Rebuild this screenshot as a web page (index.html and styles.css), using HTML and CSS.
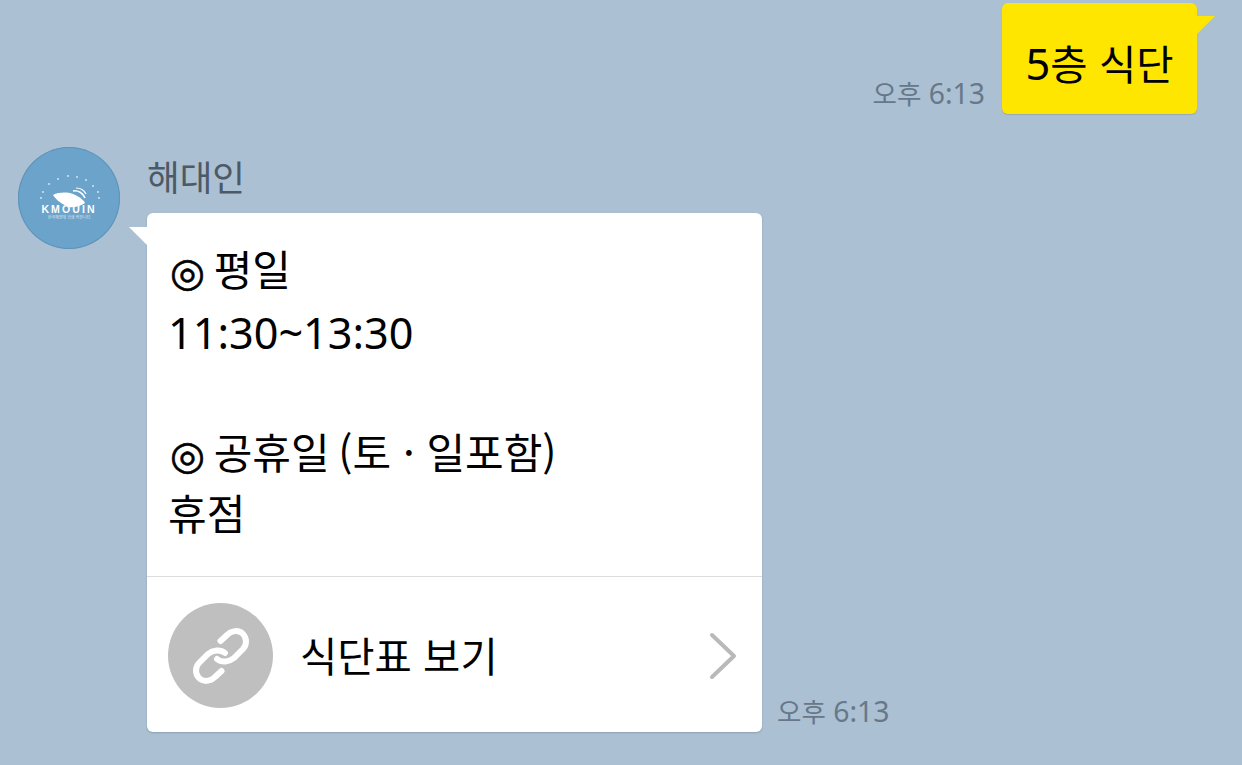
FILE: index.html
```html
<!DOCTYPE html>
<html lang="ko">

<head>
    <meta charset="UTF-8">
    <meta name="viewport" content="width=device-width, initial-scale=1.0">
    <title>채팅</title>
    <link rel="stylesheet" href="styles.css">
</head>

<body>
    <div class="chat">
        <!-- my message -->
        <div class="row-me">
            <span class="time time-me">오후 <span class="en">6:13</span></span>
            <div class="bubble-me">
                <span><span class="en">5</span>층 식단</span>
            </div>
        </div>

        <!-- bot message -->
        <div class="row-bot">
            <div class="avatar">
                <svg class="avatar-ship" width="102" height="102" viewBox="0 0 102 102">
                    <path d="M35 48 C41 45 49 45 55 47 C60 49 65 52 67 56 C63 59 56 61 50 60 C44 57 38 53 35 48 Z" fill="#fff" />
                    <path d="M55 44 C60 43 65 46 67 51" fill="none" stroke="#fff" stroke-width="1.6" />
                    <path d="M58 41 C62 41 66 43 68 47" fill="none" stroke="#fff" stroke-width="1.2" />
                    <g fill="#dcebf5">
                        <circle cx="40" cy="32" r="0.9" /><circle cx="50" cy="29" r="0.9" />
                        <circle cx="59" cy="30" r="0.9" /><circle cx="68" cy="33" r="0.9" />
                        <circle cx="31" cy="37" r="0.9" /><circle cx="75" cy="39" r="0.9" />
                        <circle cx="25" cy="45" r="0.9" /><circle cx="80" cy="45" r="0.9" />
                        <circle cx="23" cy="51" r="0.9" /><circle cx="81" cy="51" r="0.9" />
                    </g>
                </svg>
                <div class="avatar-name">KMOUIN</div>
                <div class="avatar-sub">한국해양대 학생 커뮤니티</div>
            </div>
            <div class="bot-body">
                <div class="name">해대인</div>
                <div class="bot-line">
                    <div class="card">
                        <div class="card-text">
                            <p><span class="mark">◎</span> 평일</p>
                            <p class="en">11:30~13:30</p>
                            <p class="blank">&nbsp;</p>
                            <p><span class="mark">◎</span> 공휴일 <span class="paren">(토 · 일포함)</span></p>
                            <p>휴점</p>
                        </div>
                        <div class="card-link">
                            <div class="link-icon">
                                <svg width="60" height="60" viewBox="0 0 60 60" fill="none" stroke="#fff" stroke-width="6" stroke-linecap="round">
                                    <path d="M29.5 15 L36 9 C41 4 48 4 52 8 C56 12 56 19 52 23 L43 32 C38 36 31 37 26 33" />
                                    <path d="M30.5 45 L24 51 C19 56 12 56 8 52 C4 48 4 41 8 37 L17 28 C22 24 29 23 34 27" />
                                </svg>
                            </div>
                            <div class="link-label">식단표 보기</div>
                            <svg class="chevron" width="30" height="48" viewBox="0 0 30 48" fill="none" stroke="#b9b9b9" stroke-width="4" stroke-linecap="round" stroke-linejoin="round">
                                <path d="M4 3 L26 24 L4 45" />
                            </svg>
                        </div>
                    </div>
                    <span class="time time-bot">오후 <span class="en">6:13</span></span>
                </div>
            </div>
        </div>
    </div>
</body>

</html>
```

FILE: styles.css
```css
html,
body {
    padding: 0;
    margin: 0;
}

body {
    height: 765px;
    overflow: hidden;
    background: #abc0d2;
    font-family: "Noto Sans CJK KR", "Noto Sans", sans-serif;
    color: #000;
}

/* digits are a bit larger than the hangul next to them */
.en {
    font-family: "Noto Sans", sans-serif;
    font-size: 1.07em;
}

.mark {
    font-family: "DejaVu Sans", sans-serif;
    font-size: 40px;
    margin-left: 2px;
    margin-right: -3px;
    -webkit-text-stroke: 0.6px #000;
}

.paren {
    margin-left: -3px;
}

.chat {
    display: flex;
    flex-direction: column;
    padding-top: 3px;
}

.row-me {
    display: flex;
    justify-content: flex-end;
    align-items: flex-end;
    padding-right: 45px;
}

.time {
    font-size: 26.5px;
    line-height: 38px;
    color: #66788a;
    white-space: nowrap;
}

.time-me {
    margin-right: 17px;
    margin-bottom: 2px;
}

.bubble-me {
    position: relative;
    display: flex;
    align-items: center;
    justify-content: center;
    box-sizing: border-box;
    width: 195px;
    height: 111px;
    padding-top: 8px;
    background: #ffe600;
    border-radius: 6px;
    box-shadow: 0 1px 1px rgba(80, 100, 120, 0.25);
    font-size: 40.5px;
    white-space: nowrap;
}

.bubble-me::after {
    content: "";
    position: absolute;
    top: 13px;
    right: -18px;
    width: 18px;
    height: 18px;
    background: #ffe600;
    clip-path: polygon(0 0, 100% 0, 0 100%);
}

.row-bot {
    display: flex;
    align-items: flex-start;
    margin-top: 33px;
    padding-left: 18px;
}

.avatar {
    position: relative;
    flex: none;
    width: 102px;
    height: 102px;
    margin-right: 27px;
    border-radius: 50%;
    background: #6ba3cb;
    box-shadow: inset 0 0 0 1px #5f93b8;
    overflow: hidden;
    color: #fff;
    text-align: center;
}

.avatar-ship {
    position: absolute;
    top: 0;
    left: 0;
}

.avatar-name {
    position: absolute;
    top: 56px;
    left: 0;
    right: 0;
    font-family: "Liberation Sans", sans-serif;
    font-size: 10.5px;
    line-height: 12px;
    font-weight: bold;
    letter-spacing: 2.1px;
}

.avatar-sub {
    position: absolute;
    top: 68px;
    left: 0;
    right: 0;
    font-size: 4px;
    line-height: 5px;
    color: #dcebf5;
}

.bot-body {
    display: flex;
    flex-direction: column;
}

.name {
    height: 66px;
    font-size: 35.5px;
    line-height: 58px;
    color: #4d5965;
}

.bot-line {
    display: flex;
    align-items: flex-end;
}

.card {
    position: relative;
    width: 615px;
    height: 519px;
    display: flex;
    flex-direction: column;
    background: #fff;
    border-radius: 6px;
    box-shadow: 0 1px 2px rgba(80, 100, 120, 0.35);
}

.card::before {
    content: "";
    position: absolute;
    top: 14px;
    left: -18px;
    width: 18px;
    height: 18px;
    background: #fff;
    clip-path: polygon(0 0, 100% 0, 100% 100%);
}

.card-text {
    flex: none;
    height: 364px;
    box-sizing: border-box;
    padding: 24px 21px 0;
    border-bottom: 1px solid #dcdcdc;
    font-size: 42px;
    line-height: 61px;
}

.card-text p {
    height: 61px;
    margin: 0;
    white-space: nowrap;
}

.card-text .en {
    font-size: 43.2px;
    line-height: 69px;
}

.card-link {
    flex: 1;
    display: flex;
    align-items: center;
    padding: 2px 24px 0 21px;
}

.link-icon {
    flex: none;
    display: flex;
    align-items: center;
    justify-content: center;
    width: 105px;
    height: 105px;
    border-radius: 50%;
    background: #bfbfbf;
}

.link-label {
    flex: 1;
    margin-left: 27px;
    margin-bottom: 2px;
    font-size: 40.5px;
    line-height: 50px;
}

.chevron {
    flex: none;
}

.time-bot {
    margin-left: 15px;
    margin-bottom: 2px;
}
```
